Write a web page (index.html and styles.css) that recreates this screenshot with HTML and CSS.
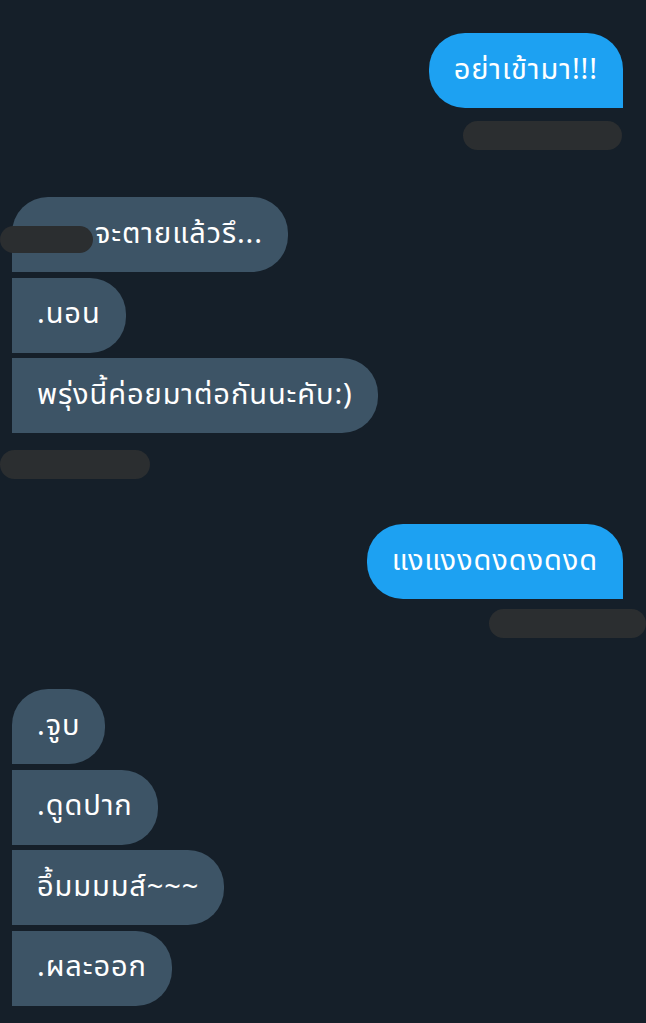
FILE: index.html
```html
<!DOCTYPE html>
<html lang="th">
<head>
  <meta charset="UTF-8">
  <meta name="viewport" content="width=device-width, initial-scale=1">
  <title>แชท</title>
  <link rel="stylesheet" href="styles.css">
</head>
<body>
  <div class="chat">

    <div class="group sent">
      <div class="bubble">อย่าเข้ามา!!!</div>
      <div class="meta meta-sent-1"></div>
    </div>

    <div class="group recv first-recv">
      <div class="bubble has-redact"><span class="hidden-name"></span>จะตายแล้วรึ...<span class="redact"></span></div>
      <div class="bubble">.นอน</div>
      <div class="bubble">พรุ่งนี้ค่อยมาต่อกันนะคับ:)</div>
      <div class="meta meta-recv-1"></div>
    </div>

    <div class="group sent second-sent">
      <div class="bubble">แงแงงดงดงดงด</div>
      <div class="meta meta-sent-2"></div>
    </div>

    <div class="group recv second-recv">
      <div class="bubble">.จูบ</div>
      <div class="bubble">.ดูดปาก</div>
      <div class="bubble">อึ้มมมมส์~~~</div>
      <div class="bubble">.ผละออก</div>
    </div>

  </div>
</body>
</html>
```

FILE: styles.css
```css
html, body { margin: 0; background: #151f29; }
body { font-family: "Noto Sans", "Noto Sans Thai", "DejaVu Sans", sans-serif; color: #fff; overflow: hidden; }

.chat { padding: 33px 23px 0 12px; display: flex; flex-direction: column; }

.group { display: flex; flex-direction: column; gap: 5.5px; }
.sent { align-items: flex-end; }
.recv { align-items: flex-start; }

.first-recv { margin-top: 47px; }
.second-sent { margin-top: 45px; }
.second-recv { margin-top: 51px; }

.bubble {
  height: 75px;
  box-sizing: border-box;
  padding: 0 25px 2px;
  display: flex;
  align-items: center;
  font-size: 29px;
  letter-spacing: 0.9px;
  white-space: nowrap;
  border-radius: 36px;
}
.sent .bubble { background: #1da1f2; border-bottom-right-radius: 0; }
.recv .bubble { background: #3d5466; border-top-left-radius: 0; border-bottom-left-radius: 0; }
.recv .bubble:first-child { border-top-left-radius: 36px; }

.has-redact { position: relative; }
.hidden-name { display: inline-block; width: 58px; }
.redact {
  position: absolute;
  left: -12px;
  top: 29px;
  width: 93px;
  height: 27px;
  border-radius: 14px;
  background: #2b2e30;
}

.meta { height: 29px; border-radius: 15px; background: #2b2e30; }
.meta-sent-1 { width: 159px; margin-top: 7.5px; margin-right: 1px; }
.meta-recv-1 { width: 150px; margin-top: 11.5px; margin-left: -12px; }
.meta-sent-2 { width: 157px; margin-top: 4.5px; margin-right: -23px; }
```
